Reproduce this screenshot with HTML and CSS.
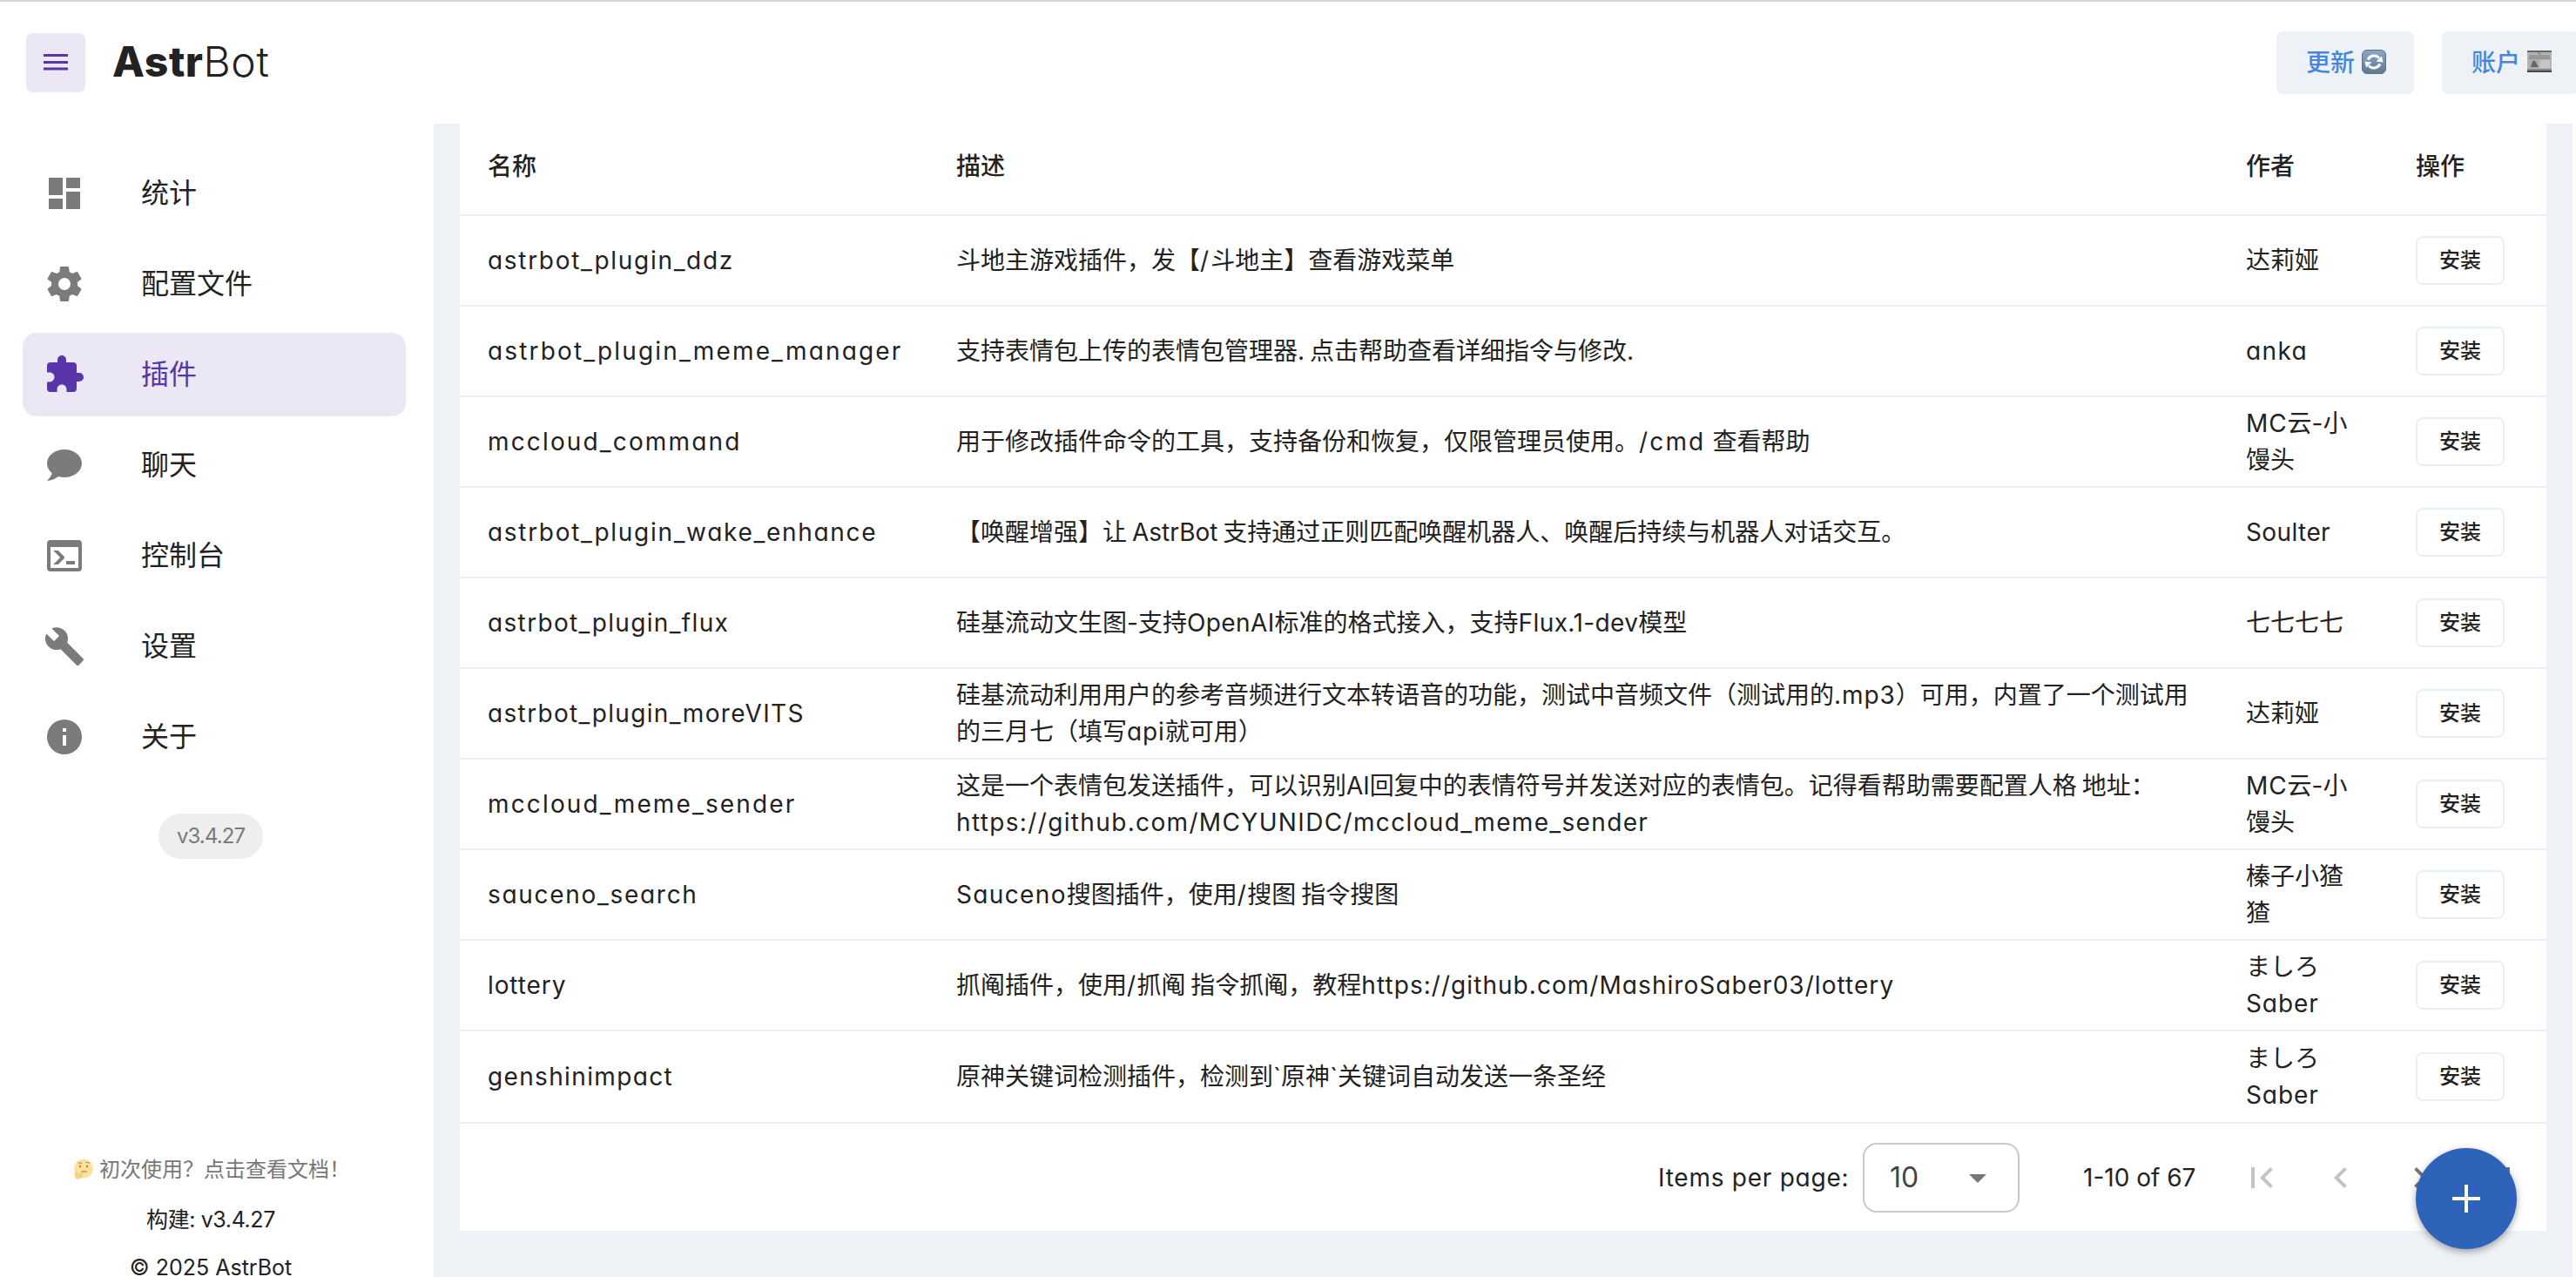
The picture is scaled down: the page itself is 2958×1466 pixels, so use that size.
FILE: index.html
```html
<!DOCTYPE html>
<html lang="zh-CN">
<head>
  <meta charset="UTF-8" />
  <meta name="viewport" content="width=device-width, initial-scale=1" />
  <title>AstrBot - 插件</title>
  <link rel="stylesheet" href="styles.css">
</head>
<body>
  <header class="topbar">
    <button class="menu-btn" aria-label="menu">
      <svg class="menu-icon" viewBox="0 0 28 20"><path d="M0 0h28v3H0zM0 8h28v3H0zM0 15.500h28v3H0z"/></svg>
    </button>
    <h1 class="logo"><b>Astr</b><span>Bot</span></h1>
    <div class="top-actions">
      <button class="top-btn">更新
        <svg class="emoji" viewBox="0 0 28 28">
          <defs><linearGradient id="blue" x1="0" y1="0" x2="0" y2="1"><stop offset="0" stop-color="#8da8c6"/><stop offset="1" stop-color="#5f7890"/></linearGradient></defs>
          <rect x=".5" y=".5" width="27" height="27" rx="5.500" fill="url(#blue)" stroke="#5a738d"/>
          <path d="M7 11.500a8 8 0 0 1 13-2M21 16.500a8 8 0 0 1-13 2" fill="none" stroke="#fff" stroke-width="3"/>
          <path d="M24.500 14.500l-8-1 6.500-6zM3.500 13.500l8 1-6.500 6z" fill="#fff"/>
        </svg>
      </button>
      <button class="top-btn">账户
        <svg class="emoji" viewBox="0 0 28 28">
          <path d="M0 1h28v25H0z" fill="#b4b4b4"/>
          <path d="M0 1h28v2H0z" fill="#666"/>
          <path d="M0 22h28v2H0z" fill="#888"/>
          <path d="M0 24h28v2H0z" fill="#444"/>
          <path d="M2 6h24v3H2z" fill="#999"/>
          <path d="M12 3.500l4 2M1 10h26" stroke="#777"/>
          <path d="M3 12h10v9H3z" fill="#aaa"/>
          <path d="M4 20l2-6 2-2 2 3 3 5z" fill="#666"/>
          <path d="M15 12h11v9H15z" fill="#c6c6c6"/>
        </svg>
      </button>
    </div>
  </header>

  <div class="layout">
    <aside class="sidebar">
      <nav class="nav">
        <a class="nav-item"><svg viewBox="0 0 24 24"><path d="M13 3v6h8V3m-8 18h8V11h-8M3 21h8v-6H3m0-2h8V3H3v10z"/></svg>统计</a>
        <a class="nav-item"><svg viewBox="0 0 24 24"><path d="M12 15.500A3.500 3.500 0 0 1 8.500 12 3.500 3.500 0 0 1 12 8.500a3.500 3.500 0 0 1 3.500 3.500 3.500 3.500 0 0 1-3.500 3.500m7.430-2.530c.04-.32.07-.64.07-.97s-.03-.66-.07-1l2.110-1.630c.19-.15.24-.42.12-.64l-2-3.460c-.12-.22-.39-.31-.61-.22l-2.490 1c-.52-.39-1.060-.73-1.690-.98l-.37-2.650A.506.506 0 0 0 14 2h-4c-.25 0-.46.18-.5.42l-.37 2.650c-.63.25-1.170.59-1.690.98l-2.490-1c-.22-.09-.49 0-.61.22l-2 3.460c-.13.22-.07.49.12.64L4.570 11c-.04.34-.07.67-.07 1s.03.65.07.97l-2.110 1.660c-.19.15-.25.42-.12.64l2 3.460c.12.22.39.3.61.22l2.490-1.010c.52.4 1.060.74 1.690.99l.37 2.650c.04.24.25.42.5.42h4c.25 0 .46-.18.5-.42l.37-2.650c.63-.26 1.170-.59 1.690-.99l2.490 1.010c.22.08.49 0 .61-.22l2-3.460c.12-.22.07-.49-.12-.64z"/></svg>配置文件</a>
        <a class="nav-item active"><svg viewBox="0 0 24 24"><path d="M20.500 11H19V7a2 2 0 0 0-2-2h-4V3.500A2.500 2.500 0 0 0 10.500 1 2.500 2.500 0 0 0 8 3.500V5H4a2 2 0 0 0-2 2v3.800h1.500c1.500 0 2.700 1.200 2.700 2.700S5 16.200 3.500 16.200H2V20a2 2 0 0 0 2 2h3.800v-1.500c0-1.500 1.200-2.700 2.700-2.700s2.700 1.200 2.700 2.700V22H17a2 2 0 0 0 2-2v-4h1.500a2.500 2.500 0 0 0 2.500-2.500 2.500 2.500 0 0 0-2.500-2.500"/></svg>插件</a>
        <a class="nav-item"><svg viewBox="0 0 24 24"><path d="M12 3C6.500 3 2 6.580 2 11c.05 2.150 1.050 4.160 2.750 5.500 0 .6-.42 2.170-2.750 4.500 2.370-.11 4.640-1 6.470-2.500 1.140.33 2.340.5 3.530.5 5.500 0 10-3.580 10-8s-4.500-8-10-8z"/></svg>聊天</a>
        <a class="nav-item"><svg viewBox="0 0 24 24"><path d="M20 19V7H4v12h16m0-16a2 2 0 0 1 2 2v14a2 2 0 0 1-2 2H4a2 2 0 0 1-2-2V5a2 2 0 0 1 2-2h16m-7 14v-2h5v2h-5m-3.420-4L5.570 9H8.400l3.300 3.300c.39.39.39 1.030 0 1.420L8.420 17H5.590l3.990-4z"/></svg>控制台</a>
        <a class="nav-item"><svg viewBox="0 0 24 24"><path d="M22.700 19l-9.100-9.100c.9-2.300.4-5-1.500-6.900-2-2-5-2.400-7.400-1.300L9 6 6 9 1.600 4.700C.4 7.100.9 10.100 2.900 12.100c1.900 1.900 4.600 2.400 6.900 1.500l9.100 9.100c.4.4 1 .4 1.400 0l2.300-2.300c.5-.4.5-1.100.1-1.400z"/></svg>设置</a>
        <a class="nav-item"><svg viewBox="0 0 24 24"><path d="M13 9h-2V7h2m0 10h-2v-6h2m-1-9A10 10 0 0 0 2 12a10 10 0 0 0 10 10 10 10 0 0 0 10-10A10 10 0 0 0 12 2z"/></svg>关于</a>
      </nav>
      <span class="chip">v3.4.27</span>
      <div class="side-footer">
        <a class="doc-link">
          <svg class="think" viewBox="0 0 24 24">
            <circle cx="12" cy="11.500" r="10.800" fill="#fae29a"/>
            <path d="M6 6q2-2 4-.5M14 4.500q3-.8 5 1" fill="none" stroke="#b59a68" stroke-width="1.200"/>
            <ellipse cx="8" cy="9" rx="1.100" ry="1.600" fill="#9a8468"/>
            <ellipse cx="16" cy="9" rx="1.100" ry="1.600" fill="#9a8468"/>
            <path d="M9 15.500q4-1.800 7 .2" fill="none" stroke="#b08d5c" stroke-width="1.200"/>
            <path d="M2 15q3 0 4 2.500l5-1q2 .5 0 2l-1 3q-3 3-7 1.500-2-3-1-8z" fill="#f7cf86"/>
          </svg>
          初次使用？点击查看文档！</a>
        <p class="build">构建: v3.4.27</p>
        <p>© 2025 AstrBot</p>
      </div>
    </aside>

    <main class="content">
      <div class="card">
        <table class="plugins">
          <thead>
            <tr><th class="col-name">名称</th><th class="col-desc">描述</th><th class="col-author">作者</th><th class="col-op">操作</th></tr>
          </thead>
          <tbody>
            <tr>
              <td class="en-lg">astrbot_plugin_ddz</td>
              <td>斗地主游戏插件，发【<span class="en-xl">/</span>斗地主】查看游戏菜单</td>
              <td>达莉娅</td>
              <td><button class="install">安装</button></td>
            </tr>
            <tr>
              <td class="en-xl">astrbot_plugin_meme_manager</td>
              <td>支持表情包上传的表情包管理器. 点击帮助查看详细指令与修改.</td>
              <td class="en-md">anka</td>
              <td><button class="install">安装</button></td>
            </tr>
            <tr>
              <td class="en-xl">mccloud_command</td>
              <td>用于修改插件命令的工具，支持备份和恢复，仅限管理员使用。<span class="en-xl">/cmd </span>查看帮助</td>
              <td><span class="en">MC</span>云-小<br>馒头</td>
              <td><button class="install">安装</button></td>
            </tr>
            <tr>
              <td class="en-lg">astrbot_plugin_wake_enhance</td>
              <td>【唤醒增强】让 <span>AstrBot </span>支持通过正则匹配唤醒机器人、唤醒后持续与机器人对话交互。</td>
              <td class="en-sm">Soulter</td>
              <td><button class="install">安装</button></td>
            </tr>
            <tr>
              <td class="en-md">astrbot_plugin_flux</td>
              <td>硅基流动文生图-支持<span class="en-sm">OpenAI</span>标准的格式接入，支持<span class="en-sm">Flux.1-dev</span>模型</td>
              <td>七七七七</td>
              <td><button class="install">安装</button></td>
            </tr>
            <tr>
              <td class="en-md">astrbot_plugin_moreVITS</td>
              <td>硅基流动利用用户的参考音频进行文本转语音的功能，测试中音频文件（测试用的<span class="en">.mp3</span>）可用，内置了一个测试用<br>的三月七（填写<span class="en">api</span>就可用）</td>
              <td>达莉娅</td>
              <td><button class="install">安装</button></td>
            </tr>
            <tr>
              <td class="en-xl">mccloud_meme_sender</td>
              <td>这是一个表情包发送插件，可以识别<span>AI</span>回复中的表情符号并发送对应的表情包。记得看帮助需要配置人格 地址：<br><span class="en-md">https://github.com/MCYUNIDC/mccloud_meme_sender</span></td>
              <td><span class="en">MC</span>云-小<br>馒头</td>
              <td><button class="install">安装</button></td>
            </tr>
            <tr>
              <td class="en-lg">sauceno_search</td>
              <td><span class="en-md">Sauceno</span>搜图插件，使用<span class="en-md">/</span>搜图 指令搜图</td>
              <td>榛子小猹<br>猹</td>
              <td><button class="install">安装</button></td>
            </tr>
            <tr>
              <td class="en">lottery</td>
              <td>抓阄插件，使用<span class="en-md">/</span>抓阄 指令抓阄，教程<span class="en-url">https://github.com/MashiroSaber03/lottery</span></td>
              <td>ましろ<br><span class="en">Saber</span></td>
              <td><button class="install">安装</button></td>
            </tr>
            <tr>
              <td class="en-md">genshinimpact</td>
              <td>原神关键词检测插件，检测到`原神`关键词自动发送一条圣经</td>
              <td>ましろ<br><span class="en">Saber</span></td>
              <td><button class="install">安装</button></td>
            </tr>
          </tbody>
        </table>
        <div class="pager">
          <span class="pager-label">Items per page:</span>
          <div class="select"><span>10</span><svg viewBox="0 0 24 24"><path d="M7 10l5 5 5-5z"/></svg></div>
          <span class="pager-info">1-10 of 67</span>
          <div class="pager-nav">
            <svg class="off" viewBox="0 0 24 24"><path d="M18.410 16.590L13.820 12l4.590-4.590L17 6l-6 6 6 6zM6 6h2v12H6z"/></svg>
            <svg class="off" viewBox="0 0 24 24"><path d="M15.410 16.580L10.830 12l4.580-4.590L14 6l-6 6 6 6z"/></svg>
            <svg viewBox="0 0 24 24"><path d="M8.590 16.580L13.170 12 8.590 7.410 10 6l6 6-6 6z"/></svg>
            <svg viewBox="0 0 24 24"><path d="M5.590 7.410L10.180 12l-4.590 4.590L7 18l6-6-6-6zM16 6h2v12h-2z"/></svg>
          </div>
        </div>
      </div>
    </main>
  </div>

  <button class="fab" aria-label="add"><svg viewBox="0 0 32 32"><path d="M14 0h4v14h14v4H18v14h-4V18H0v-4h14z"/></svg></button>
</body>
</html>
```
FILE: styles.css
```css
* {
  box-sizing: border-box;
}

body {
  margin: 0;
  height: 1466px;
  overflow: hidden;
  display: flex;
  flex-direction: column;
  font-family: Inter, "Noto Sans CJK SC", sans-serif;
  font-feature-settings: "cv11";
  font-size: 28px;
  line-height: 42px;
  color: #222;
  background: #fff;
}

button {
  font: inherit;
  font-feature-settings: inherit;
  border: none;
  padding: 0;
  cursor: pointer;
}

svg {
  fill: currentColor;
  flex: none;
}

p {
  margin: 0;
}

/* latin text tracking */
.en-sm {
  letter-spacing: 0.4px;
}

.en {
  letter-spacing: 0.9px;
}

.en-url {
  letter-spacing: 1.05px;
}

.en-md {
  letter-spacing: 1.35px;
}

.en-lg {
  letter-spacing: 1.7px;
}

.en-xl {
  letter-spacing: 2.15px;
}

/* top bar */
.topbar {
  flex: none;
  display: flex;
  align-items: center;
  height: 142px;
  padding: 0 0 0 30px;
  border-top: 2px solid #d6d5da;
}

.menu-btn {
  display: flex;
  align-items: center;
  justify-content: center;
  width: 68px;
  height: 68px;
  border-radius: 8px;
  background: #ebe7f4;
  color: #5835a8;
}

.menu-icon {
  width: 28px;
  height: 20px;
}

.logo {
  margin: 0 0 3px 31px;
  font-size: 48px;
  font-weight: 300;
  line-height: 60px;
  letter-spacing: 0.6px;
}

.logo b {
  font-weight: 800;
}

.top-actions {
  display: flex;
  gap: 32px;
  margin-left: auto;
  margin-right: -4px;
}

.top-btn {
  display: flex;
  align-items: center;
  gap: 8px;
  width: 158px;
  height: 72px;
  padding-left: 34px;
  border-radius: 8px;
  background: #eef2f6;
  color: #4686dc;
  font-weight: 500;
  white-space: nowrap;
}

.emoji {
  width: 28px;
  height: 28px;
  margin-bottom: 3px;
}

.layout {
  flex: 1;
  display: flex;
  min-height: 0;
}

/* sidebar */
.sidebar {
  flex: none;
  display: flex;
  flex-direction: column;
  align-items: center;
  width: 498px;
  padding: 32px 32px 0 26px;
}

.nav {
  display: flex;
  flex-direction: column;
  gap: 8px;
  align-self: stretch;
}

.nav-item {
  display: flex;
  align-items: center;
  gap: 64px;
  height: 96px;
  padding-left: 24px;
  border-radius: 16px;
  font-size: 32px;
}

.nav-item svg {
  width: 48px;
  height: 48px;
  color: #7b7b7b;
}

.nav-item.active {
  background: #ebe7f4;
  color: #5835a8;
}

.nav-item.active svg {
  color: inherit;
}

.chip {
  flex: none;
  width: 120px;
  height: 52px;
  margin: 40px 8px 0 0;
  border-radius: 26px;
  background: #eee;
  color: #7a7a7a;
  font-size: 24px;
  letter-spacing: -0.9px;
  line-height: 52px;
  text-align: center;
}

.side-footer {
  margin: 328px 8px 0 0;
  text-align: center;
  font-size: 25px;
  line-height: 55px;
  white-space: nowrap;
}

.build {
  letter-spacing: -0.4px;
}

.doc-link {
  display: flex;
  align-items: center;
  gap: 6px;
  height: 59px;
  padding-bottom: 3px;
  margin-left: 2px;
  color: #777;
  font-size: 24px;
}

.think {
  width: 24px;
  height: 24px;
}

/* plugin table */
.content {
  flex: 1;
  margin-right: 4px;
  padding: 0 30px;
  background: #eef2f6;
}

.card {
  height: 1271px;
  background: #fff;
}

.plugins {
  width: 100%;
  table-layout: fixed;
  border-collapse: separate;
  border-spacing: 0;
}

.plugins th {
  height: 106px;
  padding: 0 32px 7px;
  border-bottom: 2px solid #e8eff9;
  text-align: left;
  font-weight: 500;
}

.plugins td {
  height: 104px;
  padding: 0 32px;
  border-bottom: 2px solid #e8eff9;
  white-space: nowrap;
  word-spacing: -2px;
}

.plugins tr:last-child td {
  height: 106px;
  border-bottom-color: #eee;
}

.col-name {
  width: 538px;
}

.col-author {
  width: 195px;
}

.col-op {
  width: 182px;
}

.install {
  display: block;
  width: 102px;
  height: 56px;
  border: 2px solid #e9eff9;
  border-radius: 8px;
  background: #fff;
  color: #222;
  font-size: 24px;
  font-weight: 500;
  line-height: 52px;
}

/* pagination */
.pager {
  display: flex;
  align-items: center;
  height: 123px;
  padding-left: 1376px;
}

.pager-label {
  width: 235px;
  letter-spacing: 0.75px;
  white-space: nowrap;
}

.select {
  display: flex;
  align-items: center;
  justify-content: space-between;
  width: 180px;
  height: 80px;
  padding: 0 22px 0 29px;
  border: 2px solid #c9c9c9;
  border-radius: 16px;
  font-size: 32px;
  color: #444;
}

.select svg {
  width: 48px;
  height: 48px;
  color: #777;
}

.pager-info {
  width: 181px;
  margin-left: 73px;
  white-space: nowrap;
}

.pager-nav {
  display: flex;
  gap: 43px;
  color: #777;
}

.pager-nav svg {
  width: 48px;
  height: 48px;
}

.pager-nav .off {
  color: #c4c4c4;
}

.fab {
  position: fixed;
  right: 68px;
  bottom: 32px;
  display: flex;
  align-items: center;
  justify-content: center;
  width: 116px;
  height: 116px;
  border-radius: 50%;
  background: #2e63ba;
  color: #fff;
  box-shadow: 0 3px 8px rgba(0, 0, 0, 0.35);
}

.fab svg {
  width: 32px;
  height: 32px;
}
```
